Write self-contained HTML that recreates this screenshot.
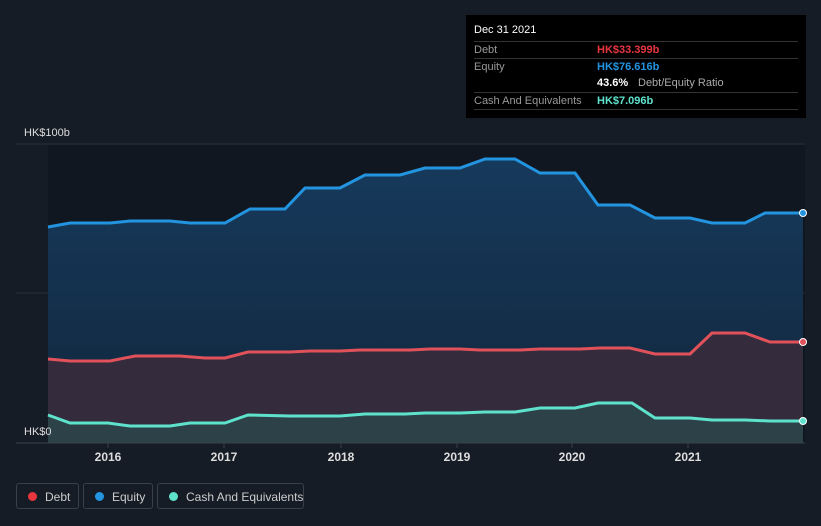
<!DOCTYPE html><html><head><style>
html,body{margin:0;background:#161c26;width:821px;height:526px;overflow:hidden;font-family:"Liberation Sans",sans-serif;position:relative}
.tt{position:absolute;left:466px;top:15px;width:340px;height:103px;background:#000;color:#fff;font-size:11px}
.r{position:absolute;left:8px;right:8px;height:16px;border-top:1px solid #333;}
.l{position:absolute;left:0;top:2px;color:#999}.v{position:absolute;left:123px;top:2px;font-weight:bold}
.lg{position:absolute;top:483px;height:26px;border:1px solid #3a404a;border-radius:3px;color:#ccc;font-size:12px;line-height:26px;box-sizing:border-box;white-space:nowrap}
.lg i{position:absolute;left:11px;top:8px;width:9px;height:9px;border-radius:50%}
</style></head><body>
<svg width="821" height="526" style="position:absolute;left:0;top:0">
<defs><linearGradient id="ge" x1="0" y1="0" x2="0" y2="1"><stop offset="0" stop-color="#163a5c"/><stop offset="1" stop-color="#12263c"/></linearGradient></defs>
<rect x="48" y="144" width="757" height="299" fill="#111720"/>
<line x1="16" y1="144" x2="805" y2="144" stroke="#2a313c"/>
<line x1="16" y1="293" x2="805" y2="293" stroke="#2a313c"/>
<polygon fill="url(#ge)" points="48,227 70,223 110,223 130,221 170,221 190,223 225,223 250,209 285,209 305,188 340,188 365,175 400,175 425,168 460,168 485,159 515,159 540,173 575,173 598,205 630,205 655,218 690,218 712,223 745,223 765,213 803,213 803,443 48,443"/>
<polygon fill="#342c3c" points="48,359 70,361 110,361 135,356 180,356 205,358 225,358 248,352 290,352 310,351 340,351 360,350 410,350 430,349 460,349 480,350 520,350 540,349 580,349 600,348 630,348 655,354 690,354 712,333 745,333 770,342 803,342 803,443 48,443"/>
<polygon fill="#2c4248" points="48,415 70,423 108,423 130,426 170,426 190,423 225,423 248,415 290,416 340,416 365,414 405,414 425,413 460,413 485,412 515,412 540,408 575,408 598,403 632,403 655,418 690,418 712,420 745,420 770,421 803,421 803,443 48,443"/>
<polyline fill="none" stroke="#2394df" stroke-width="3" points="48,227 70,223 110,223 130,221 170,221 190,223 225,223 250,209 285,209 305,188 340,188 365,175 400,175 425,168 460,168 485,159 515,159 540,173 575,173 598,205 630,205 655,218 690,218 712,223 745,223 765,213 803,213"/>
<polyline fill="none" stroke="#e0515a" stroke-width="3" points="48,359 70,361 110,361 135,356 180,356 205,358 225,358 248,352 290,352 310,351 340,351 360,350 410,350 430,349 460,349 480,350 520,350 540,349 580,349 600,348 630,348 655,354 690,354 712,333 745,333 770,342 803,342"/>
<polyline fill="none" stroke="#5ee2cc" stroke-width="3" points="48,415 70,423 108,423 130,426 170,426 190,423 225,423 248,415 290,416 340,416 365,414 405,414 425,413 460,413 485,412 515,412 540,408 575,408 598,403 632,403 655,418 690,418 712,420 745,420 770,421 803,421"/>
<circle cx="803" cy="213" r="3.5" fill="#2394df" stroke="#fff"/><circle cx="803" cy="342" r="3.5" fill="#e0515a" stroke="#fff"/><circle cx="803" cy="421" r="3.5" fill="#5ee2cc" stroke="#fff"/>
<line x1="16" y1="443" x2="805" y2="443" stroke="#3a404a"/>
<g stroke="#3a404a"><line x1="108" y1="443" x2="108" y2="448"/><line x1="224" y1="443" x2="224" y2="448"/><line x1="341" y1="443" x2="341" y2="448"/><line x1="457" y1="443" x2="457" y2="448"/><line x1="572" y1="443" x2="572" y2="448"/><line x1="688" y1="443" x2="688" y2="448"/></g>
<g fill="#ddd" font-size="12" text-anchor="middle" font-family="Liberation Sans" font-weight="bold"><text x="108" y="461">2016</text><text x="224" y="461">2017</text><text x="341" y="461">2018</text><text x="457" y="461">2019</text><text x="572" y="461">2020</text><text x="688" y="461">2021</text></g>
<text x="24" y="136" fill="#ddd" font-size="11" font-family="Liberation Sans">HK$100b</text>
<text x="24" y="435" fill="#ddd" font-size="11" font-family="Liberation Sans">HK$0</text>
</svg>
<div class="tt">
<div style="position:absolute;left:8px;top:9px">Dec 31 2021</div>
<div class="r" style="top:26px"><span class="l">Debt</span><span class="v" style="color:#e8363f">HK$33.399b</span></div>
<div class="r" style="top:43px"><span class="l">Equity</span><span class="v" style="color:#2394df">HK$76.616b</span></div>
<div class="r" style="top:60px;border:0"><span class="v">43.6%</span><span style="position:absolute;left:164px;top:2px;color:#aaa">Debt/Equity Ratio</span></div>
<div class="r" style="top:77px"><span class="l">Cash And Equivalents</span><span class="v" style="color:#5ee2cc">HK$7.096b</span></div>
<div class="r" style="top:94px;height:0"></div>
</div>
<div class="lg" style="left:16px;width:63px"><i style="background:#e8363f"></i><span style="position:absolute;left:28px">Debt</span></div>
<div class="lg" style="left:83px;width:70px"><i style="background:#2394df"></i><span style="position:absolute;left:28px">Equity</span></div>
<div class="lg" style="left:157px;width:147px"><i style="background:#5ee2cc"></i><span style="position:absolute;left:28px">Cash And Equivalents</span></div>
</body></html>
